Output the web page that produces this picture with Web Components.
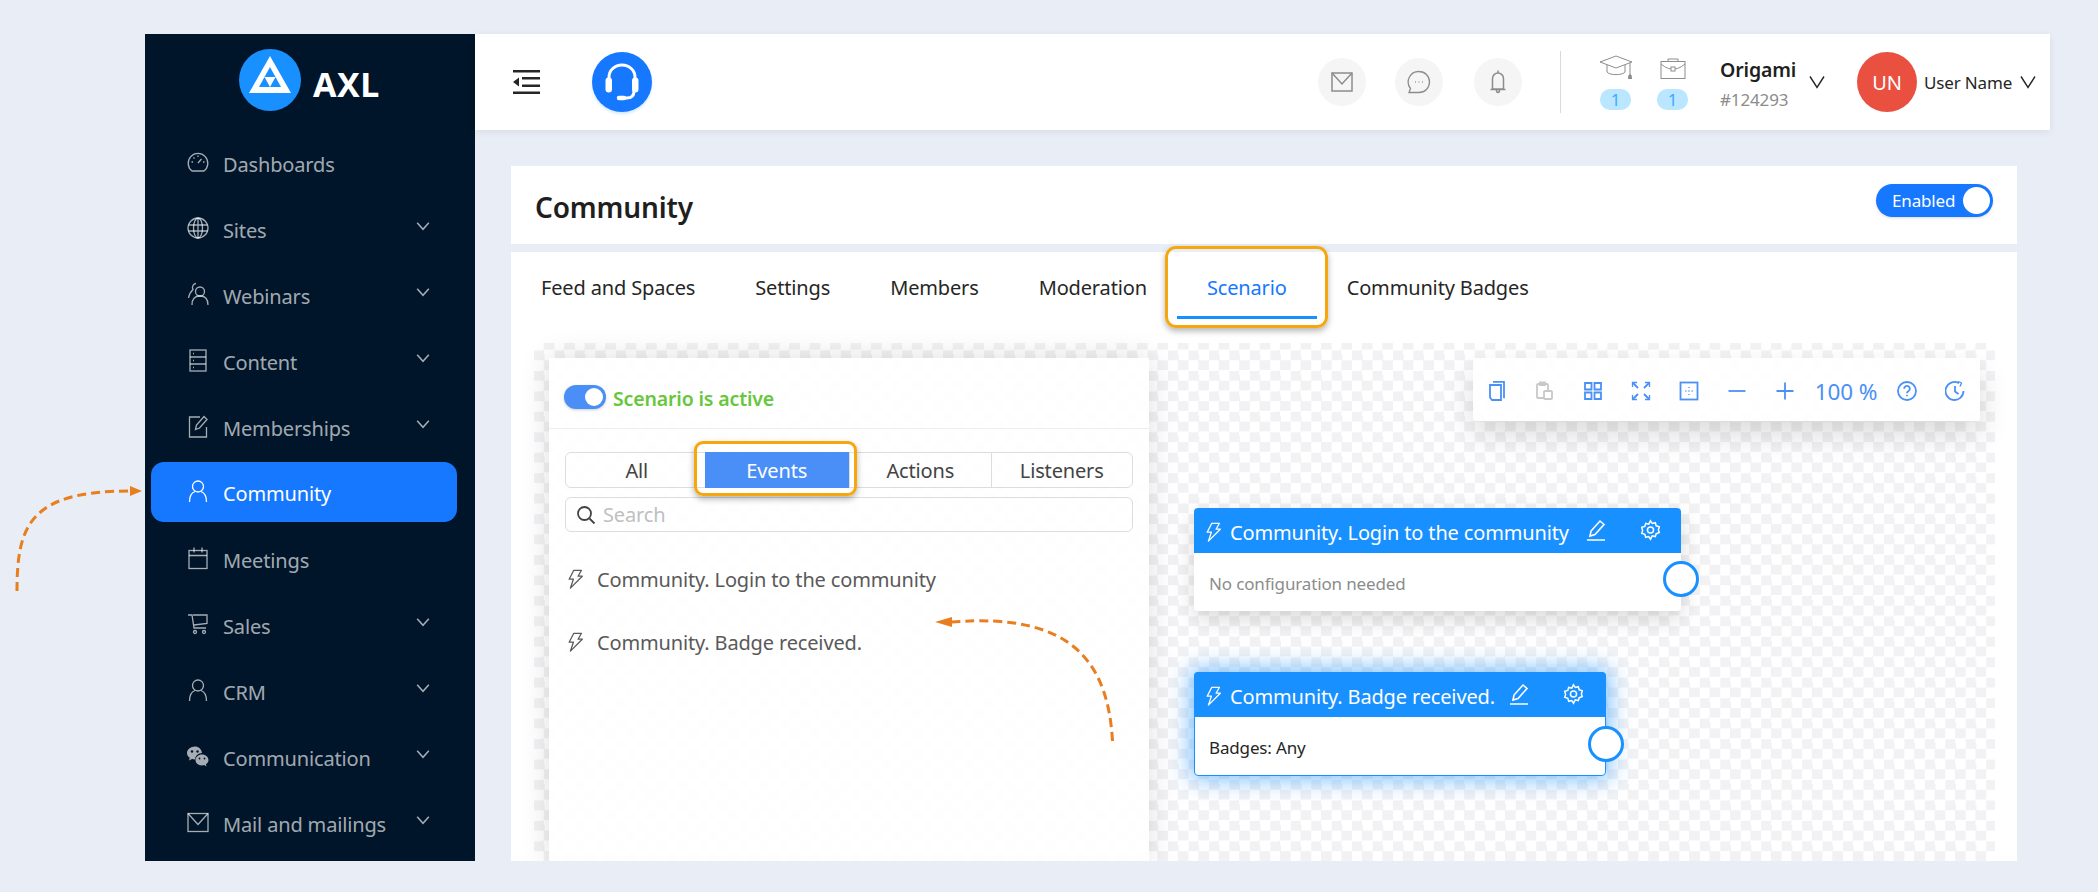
<!DOCTYPE html>
<html lang="en">
<head>
<meta charset="utf-8">
<title>AXL Community</title>
<style>
  html, body { margin: 0; height: 100%; }
  body {
    background: #e9eef6;
    font-family: "Noto Sans", "Open Sans", sans-serif;
    letter-spacing: -.15px;
    overflow: hidden;
  }
</style>
</head>
<body>

<axl-app>
  <axl-sidebar slot="side">
    <nav-item icon="dash" label="Dashboards"></nav-item>
    <nav-item icon="globe" label="Sites" more></nav-item>
    <nav-item icon="people" label="Webinars" more></nav-item>
    <nav-item icon="content" label="Content" more></nav-item>
    <nav-item icon="member" label="Memberships" more></nav-item>
    <nav-item icon="user" label="Community" active></nav-item>
    <nav-item icon="calendar" label="Meetings"></nav-item>
    <nav-item icon="cart" label="Sales" more></nav-item>
    <nav-item icon="user" label="CRM" more></nav-item>
    <nav-item icon="wechat" label="Communication" more></nav-item>
    <nav-item icon="mail" label="Mail and mailings" more></nav-item>
  </axl-sidebar>
  <axl-header slot="head"></axl-header>
  <title-card slot="main">Community</title-card>
  <tab-card slot="main">
    <scenario-canvas>
      <scenario-panel></scenario-panel>
      <canvas-toolbar></canvas-toolbar>
      <flow-node title="Community. Login to the community" style="left:660px;top:165px;width:487px;height:103px" edit-at="392" gear-at="446" port-y="71">No configuration needed</flow-node>
      <flow-node title="Community. Badge received." selected style="left:660px;top:329px;width:412px;height:104px" edit-at="315" gear-at="369" port-y="72">Badges: Any</flow-node>
    </scenario-canvas>
  </tab-card>
</axl-app>

<curved-arrow style="left:10px;top:484px" w="140" h="114" d="M7 107 C7 41 20 7 120 7" head="120,7 132,7"></curved-arrow>
<curved-arrow style="left:928px;top:612px" w="190" h="136" d="M184.500 129 C180 53 147 0 24 10" head="24,10 7,10"></curved-arrow>

<script>
const ICONS = {
  dash: '<path d="M6 21h12a9.800 9.800 0 1 0-12 0z"/><path d="M12 13l3.500-4M12 5.500v1.500M5.500 12H7M18.500 12H17M7.500 7.500l1 1"/>',
  globe: '<circle cx="12" cy="12" r="10"/><ellipse cx="12" cy="12" rx="4.500" ry="10"/><path d="M12 2v20M2.500 9h19M2.500 15h19"/>',
  people: '<circle cx="14" cy="9.500" r="4.500"/><path d="M6 23c0-5 2-9 8-9s8 4 8 9"/><path d="M10 1.500a4 4 0 0 0-3 6c-2 2-4 5-4.500 8.500"/>',
  content: '<rect x="4" y="2" width="16" height="21"/><path d="M4 9h16M4 16h16M7 5.500h1M7 12.500h1M7 19.500h1"/>',
  member: '<path d="M14 3H3.500v20h17V13"/><path d="M9.500 15.500l1-4.500L18 2.500l3 3-7.500 8.500z"/>',
  user: '<circle cx="12" cy="7.500" r="5.500"/><path d="M3.500 23c0-6 2.500-9.500 5.500-10.500M20.500 23c0-6-2.500-9.500-5.500-10.500"/>',
  calendar: '<rect x="3" y="4.500" width="18" height="18"/><path d="M3 9.500h18M8 1.500v5M16 1.500v5"/>',
  cart: '<path d="M2 3h4l2 13h12M7 3h14v8.500L8 13"/><circle cx="9" cy="20" r="1.500"/><circle cx="18" cy="20" r="1.500"/>',
  mail: '<rect x="2" y="3.500" width="20" height="18"/><path d="M2 3.500l10 11 10-11"/>',
  chev: '<path d="M5 8l7 8 7-8"/>',
  vee: '<path d="M5 6.500l7 11 7-11"/>'
};
const svg = (name, size, sw) =>
  `<svg width="${size}" height="${size}" viewBox="0 0 24 24" fill="none" stroke="currentColor" stroke-width="${sw || 1.300}">${ICONS[name]}</svg>`;
const WECHAT = '<svg width="24" height="24" viewBox="0 0 24 24" fill="currentColor"><path d="M9 2.500c-4.500 0-8 3-8 6.500 0 2 1 3.500 2.700 4.800L3 16.500l3-1.500c1 .3 2 .5 3 .5a7 7 0 0 1 7-6.500C15.500 5 12.500 2.500 9 2.500z"/><path d="M16 10.500c-3.800 0-6.500 2.500-6.500 5.500s2.700 5.500 6.500 5.500c.8 0 1.500-.1 2.200-.4l2.300 1.400-.6-2.300c1.500-1 2.600-2.500 2.600-4.200 0-3-2.700-5.500-6.500-5.500z"/><g fill="#001529"><circle cx="6" cy="7.500" r="1.200"/><circle cx="11.500" cy="7.500" r="1.200"/><circle cx="13.500" cy="14.500" r=".9"/><circle cx="18.500" cy="14.500" r=".9"/></g></svg>';
const BOLT = s => `<svg width="${s}" height="${s * 1.2}" viewBox="0 0 20 24" fill="none" stroke="currentColor" stroke-width="1.500" stroke-linejoin="round"><path d="M8 1.500h9l-4 7h5L4 22.500l3.500-10.500H2.500z"/></svg>`;

class AxlApp extends HTMLElement {
  constructor() {
    super();
    this.attachShadow({ mode: "open" });
    this.shadowRoot.innerHTML = `
<style>
  :host { display: grid; grid-template-columns: 330px 1575px; grid-template-rows: 96px 731px;
          margin: 34px 0 0 145px; width: 1905px; height: 827px; }
  .side { grid-row: 1 / 3; min-height: 0; overflow: hidden; display: block; }
  .body { display: flex; flex-direction: column; gap: 8px; padding: 36px 33px 0 36px; min-height: 0; overflow: hidden; }
</style>
<slot name="side" class="side"></slot>
<slot name="head"></slot>
<div class="body"><slot name="main"></slot></div>`;
  }
}

class AxlSidebar extends HTMLElement {
  constructor() {
    super();
    this.attachShadow({ mode: "open" });
    this.shadowRoot.innerHTML = `
<style>
  :host { display: block; height: 100%; background: #001529; overflow: hidden; }
  .logo { display: flex; align-items: center; gap: 12px; height: 100px; padding: 0 0 0 94px; box-sizing: border-box; }
  .logo b { color: #fff; font: 700 34px "Noto Sans", sans-serif; letter-spacing: .5px; }
  .items { display: flex; flex-direction: column; gap: 6px; }
</style>
<div class="logo">
  <svg width="62" height="62" viewBox="0 0 62 62" style="margin-top:-8px">
    <circle cx="31" cy="31" r="31" fill="#1890ff"/>
    <path fill="#fff" d="M31 7L52 44H10z"/>
    <path fill="#1890ff" d="M31 18L42 38H20z"/>
    <path fill="#fff" d="M25.500 28h11L31 38z"/>
  </svg>
  <b>AXL</b>
</div>
<div class="items"><slot></slot></div>`;
  }
}

class NavItem extends HTMLElement {
  connectedCallback() {
    const icon = this.getAttribute("icon");
    this.attachShadow({ mode: "open" });
    this.shadowRoot.innerHTML = `
<style>
  :host { display: flex; align-items: center; height: 60px; margin: 0 18px 0 6px; padding: 0 0 0 35px;
          border-radius: 13px; color: rgba(255,255,255,.65); font-size: 20px; }
  :host([active]) { background: #1677ff; color: #fff; margin-top: -2px; margin-bottom: 2px; padding-top: 2px; height: 58px; }
  .ic { width: 24px; height: 24px; margin: -4px 13px 0 0; }
  .ic svg { display: block; }
  .lb { flex: 1; white-space: nowrap; }
  .ch { margin-right: 24px; margin-top: -8px; display: flex; }
</style>
<span class="ic">${icon === "wechat" ? WECHAT : svg(icon, 24)}</span>
<span class="lb">${this.getAttribute("label")}</span>
${this.hasAttribute("more") ? `<span class="ch">${svg("chev", 20, 1.800)}</span>` : ""}`;
  }
}

class AxlHeader extends HTMLElement {
  constructor() {
    super();
    this.attachShadow({ mode: "open" });
    this.shadowRoot.innerHTML = `
<style>
  :host { display: flex; align-items: center; height: 96px; padding: 0 10px 0 38px; background: #fff;
          box-shadow: 0 2px 8px rgba(0,0,0,.07); color: #262626; position: relative; }
  .burger { width: 27px; height: 24px; margin-right: 52px; }
  .help { width: 60px; height: 60px; border-radius: 50%; background: #1677ff; box-shadow: 0 2px 3px rgba(24,144,255,.2); }
  .right { margin-left: auto; display: flex; align-items: center; }
  .round { width: 48px; height: 48px; border-radius: 50%; background: #f5f5f5; color: #8c8c8c; margin-right: 29px;
           display: flex; align-items: center; justify-content: center; }
  .round.wide { margin-right: 31px; }
  .rule { width: 1px; height: 62px; background: #d9d9d9; margin: 0 39px 0 9px; }
  .stat { width: 31px; display: flex; flex-direction: column; align-items: center; margin-right: 26px; color: #8c8c8c; }
  .stat .pic { height: 24px; margin-bottom: 10px; display: flex; align-items: flex-end; }
  .stat i { width: 31px; height: 21px; border-radius: 10px; background: #bae7ff; color: #40a9ff;
            font: 400 17px/21px "Noto Sans", sans-serif; text-align: center; }
  .org { margin: 4px 0 0 6px; line-height: 1; width: 79px; }
  .org b { display: block; font-weight: 600; font-size: 19.500px; color: #1f1f1f; margin-bottom: 12px; }
  .org span { color: #8c8c8c; font-size: 17px; }
  .chev { display: flex; color: #262626; }
  .av { width: 60px; height: 60px; border-radius: 50%; background: #e95040; color: #fff; font-size: 20px;
        display: flex; align-items: center; justify-content: center; margin: 0 7px 0 28px; }
  .name { font-size: 17px; width: 92px; white-space: nowrap; }
</style>
<svg class="burger" viewBox="0 0 27 24" fill="#262626"><path d="M0 0h27v2.500H0zM9 7h18v2.500H9zM9 14.500h18V17H9zM0 21.500h27V24H0zM6 7.500v9L0 12z"/></svg>
<svg class="help" viewBox="0 0 60 60" fill="none" stroke="#fff" stroke-width="3" stroke-linecap="round">
  <path d="M17 28v-3a13 12 0 0 1 26 0v3"/>
  <rect x="15" y="27" width="3.500" height="12" rx="1.700" fill="#fff"/>
  <rect x="41.500" y="27" width="3.500" height="12" rx="1.700" fill="#fff"/>
  <path d="M42 39c0 5-3 7-7 7h-7" /><path d="M27 46h5" stroke-width="4.500"/>
</svg>
<div class="right">
  <span class="round"><svg width="24" height="24" viewBox="0 0 24 24" fill="none" stroke="currentColor" stroke-width="1.500"><rect x="2" y="3" width="20" height="18"/><path d="M2 3l10 11L22 3"/></svg></span>
  <span class="round wide"><svg width="24" height="24" viewBox="0 0 24 24" fill="none" stroke="currentColor" stroke-width="1.300"><path d="M12 1.500a10.500 10.500 0 0 1 0 21H2l1.500-4A10.500 10.500 0 0 1 12 1.500z"/><path d="M8 12h.8M11.600 12h.8M15.200 12h.8" stroke-width="1.600"/></svg></span>
  <span class="round"><svg width="24" height="24" viewBox="0 0 24 24" fill="none" stroke="currentColor" stroke-width="1.500"><path d="M6.500 19V8.500a5.500 5.500 0 0 1 11 0V19zM4.500 19.500h15M12 .5V3M10.500 20a1.500 2.500 0 0 0 3 0"/></svg></span>
  <span class="rule"></span>
  <div class="stat"><span class="pic"><svg width="34" height="24" viewBox="0 0 34 24" fill="none" stroke="currentColor" stroke-width="1"><path d="M17 1L33 7 17 13 1 7z"/><path d="M8 10v7c3 3.500 15 3.500 18 0v-7M31 8v13"/><path d="M30 20h2l.500 4h-3z" fill="currentColor"/></svg></span><i>1</i></div>
  <div class="stat"><span class="pic"><svg width="26" height="21" viewBox="0 0 26 21" fill="none" stroke="currentColor" stroke-width="1"><rect x="1" y="3.500" width="24" height="17"/><path d="M8 3.500V1h10v2.500M1 6c5 4 8 5 12 5s7-1 12-5"/><rect x="11" y="9" width="4" height="4" fill="#fff"/></svg></span><i>1</i></div>
  <div class="org"><b>Origami</b><span>#124293</span></div>
  <span class="chev" style="margin-left:6px">${svg("vee", 24, 1.400)}</span>
  <span class="av">UN</span>
  <span class="name">User Name</span>
  <span class="chev">${svg("vee", 24, 1.400)}</span>
</div>`;
  }
}

class TitleCard extends HTMLElement {
  constructor() {
    super();
    this.attachShadow({ mode: "open" });
    this.shadowRoot.innerHTML = `
<style>
  :host { display: flex; align-items: center; justify-content: space-between; height: 78px; flex: none;
          padding: 0 24px; background: #fff; }
  h1 { margin: 4px 0 0; font-size: 28px; font-weight: 600; color: #1f1f1f; }
  .sw { display: flex; align-items: center; justify-content: space-between; width: 117px; height: 33px; margin-top: -9px;
        box-sizing: border-box; padding: 0 3px 0 16px; border-radius: 17px; background: #1677ff; color: #fff;
        font-size: 17px; box-shadow: 0 1px 3px rgba(0,0,0,.15); }
  .sw i { width: 27px; height: 27px; border-radius: 50%; background: #fff; }
</style>
<h1><slot></slot></h1>
<span class="sw">Enabled<i></i></span>`;
  }
}

class TabCard extends HTMLElement {
  constructor() {
    super();
    this.attachShadow({ mode: "open" });
    this.shadowRoot.innerHTML = `
<style>
  :host { display: flex; flex-direction: column; flex: 1; min-height: 0; background: #fff; }
  .tabs { display: flex; height: 67px; flex: none; margin-bottom: 24px; font-size: 20px; color: #262626; position: relative; z-index: 2; }
  .tab { padding: 0 30px; line-height: 72px; position: relative; white-space: nowrap; }
  .tab.on { color: #1677ff; border-bottom: 3px solid #1890ff; height: 64px; }
  .tab.on::after { content: ""; position: absolute; inset: -6px -11px -12px -12px; border: 3px solid #f5a70d;
                   border-radius: 11px; box-shadow: 0 3px 6px rgba(0,0,0,.3); }
  .wrap { flex: 1; min-height: 0; padding: 0 22px 0 23px; display: flex; }
</style>
<div class="tabs">
  <span class="tab">Feed and Spaces</span><span class="tab">Settings</span><span class="tab">Members</span>
  <span class="tab">Moderation</span><span class="tab on">Scenario</span><span class="tab">Community Badges</span>
</div>
<div class="wrap"><slot></slot></div>`;
  }
}

class ScenarioCanvas extends HTMLElement {
  constructor() {
    super();
    this.attachShadow({ mode: "open" });
    this.shadowRoot.innerHTML = `
<style>
  :host { display: block; flex: 1; position: relative; padding: 15px 0 0 15px; box-sizing: border-box;
          background-color: #fff;
          background-image: conic-gradient(#f2f2f4 25%, transparent 0 50%, #f2f2f4 0 75%, transparent 0);
          background-size: 20.460px 20.460px; background-position: 0 -3.200px; }
</style>
<slot></slot>`;
  }
}

class ScenarioPanel extends HTMLElement {
  constructor() {
    super();
    this.attachShadow({ mode: "open" });
    this.shadowRoot.innerHTML = `
<style>
  :host { display: block; width: 600px; height: 100%; background: rgba(255,255,255,.88);
          box-shadow: 0 0 28px rgba(0,0,0,.13); }
  .top { display: flex; align-items: center; gap: 7px; height: 71px; box-sizing: border-box; padding: 8px 0 0 15px; border-bottom: 1px solid #eee; }
  .tg { width: 42px; height: 24px; border-radius: 12px; background: #4a8ff7; position: relative; box-shadow: 0 1px 3px rgba(0,0,0,.2); }
  .tg i { position: absolute; right: 3px; top: 3px; width: 18px; height: 18px; border-radius: 50%; background: #fff; }
  .st { color: #67c73c; font-size: 19.500px; font-weight: 600; padding-top: 3px; }
  .seg { display: grid; grid-template-columns: repeat(4, 1fr); margin: 23px 16px 0; height: 36px; border: 1px solid #ddd;
         border-radius: 6px; font-size: 20px; color: #434343; box-sizing: border-box; }
  .seg span { display: flex; align-items: center; justify-content: center; border-left: 1px solid #ddd; position: relative; }
  .seg span:first-child { border-left: 0; }
  .seg .on { background: #4a8ff7; color: #fff; margin: -1px 0 -1px -3px; border: 0; }
  .seg .on::after { content: ""; position: absolute; inset: -11px -8px -8px -11px; border: 3px solid #f5a70d;
                    border-radius: 9px; box-shadow: 0 3px 6px rgba(0,0,0,.3); }
  .search { display: flex; align-items: center; gap: 7px; margin: 9px 16px 0; height: 35px; box-sizing: border-box;
            padding-left: 10px; border: 1px solid #ddd; border-radius: 6px; color: #bfbfbf; font-size: 20px; }
  .search svg { color: #434343; }
  .row { display: flex; align-items: center; gap: 13px; padding-left: 18px; height: 63px; color: #595959; font-size: 20px; }
  .list { margin-top: 16px; }
</style>
<div class="top"><span class="tg"><i></i></span><span class="st">Scenario is active</span></div>
<div class="seg"><span>All</span><span class="on">Events</span><span>Actions</span><span>Listeners</span></div>
<div class="search"><svg width="20" height="20" viewBox="0 0 20 20" fill="none" stroke="currentColor" stroke-width="1.800"><circle cx="8.500" cy="8.500" r="6.500"/><path d="M13.500 13.500l5 5"/></svg>Search</div>
<div class="list">
  <div class="row">${BOLT(17)}<span>Community. Login to the community</span></div>
  <div class="row">${BOLT(17)}<span>Community. Badge received.</span></div>
</div>`;
  }
}

class CanvasToolbar extends HTMLElement {
  constructor() {
    super();
    this.attachShadow({ mode: "open" });
    const i = (body, extra) => `<span class="t ${extra || ""}"><svg width="20" height="20" viewBox="0 0 20 20" fill="none" stroke="currentColor" stroke-width="1.800">${body}</svg></span>`;
    this.shadowRoot.innerHTML = `
<style>
  :host { position: absolute; top: 15px; right: 15px; width: 507px; height: 63px; display: flex; align-items: center;
          box-sizing: border-box; padding-top: 3px;
          background: rgba(255,255,255,.88); border-radius: 4px; color: #4a90f7;
          box-shadow: 0 14px 30px rgba(0,0,0,.14); }
  .t { width: 48px; flex: none; display: flex; justify-content: center; }
  .off { color: #c8c8c8; }
  .pc { width: 74px; flex: none; font-size: 22.500px; text-align: center; white-space: nowrap; }
</style>
${i('<path d="M6 .8h11v16.500M3 4h11v15H5l-2-2.500z"/>')}
${i('<rect x="2" y="3" width="11" height="14" rx="1"/><rect x="9" y="10" width="8" height="8" rx="1" fill="#fff"/><path d="M5 1.500h5V4H5z" fill="currentColor"/>', "off")}
${i('<path d="M2 2h6.500v6.500H2zM11.500 2H18v6.500h-6.500zM2 11.500h6.500V18H2zM11.500 11.500H18V18h-6.500z"/>')}
${i('<path d="M2 2l5 5M18 2l-5 5M2 18l5-5M18 18l-5-5"/><path d="M1.500 6V1.500H6M14 1.500h4.500V6M1.500 14v4.500H6M14 18.500h4.500V14" stroke-width="1.300"/>')}
${i('<rect x="1.500" y="1.500" width="17" height="17"/><path d="M10 6v.8M10 9.600v.8M10 13.200v.8M6.500 10h.8M12.700 10h.8"/>')}
${i('<path d="M1.500 10h17"/>')}
${i('<path d="M1.500 10h17M10 1.500v17"/>')}
<span class="pc">100 %</span>
${i('<circle cx="10" cy="10" r="9"/><path d="M7.200 7.800a2.800 2.800 0 1 1 4.300 2.300c-1 .6-1.500 1-1.500 2.200M10 14v1.300"/>')}
${i('<path d="M18.500 10A9 9 0 1 1 14 2.200M10 5v5.500l3.500 2.500"/><path d="M13 .5l3.500 1.500L15 5.500" stroke-width="1.300"/>')}`;
  }
}

class FlowNode extends HTMLElement {
  connectedCallback() {
    this.attachShadow({ mode: "open" });
    const at = n => +this.getAttribute(n);
    this.shadowRoot.innerHTML = `
<style>
  :host { position: absolute; display: block; box-sizing: border-box; background: #fff; border-radius: 4px;
          box-shadow: 0 8px 22px rgba(0,0,0,.15); font-size: 20px; }
  :host([selected]) { outline: 1.500px solid #1890ff; outline-offset: -1.500px; box-shadow: 0 0 22px 4px rgba(24,144,255,.55); }
  .h { display: flex; align-items: center; height: 45px; box-sizing: border-box; padding: 3px 0 0 11px; background: #1890ff; color: #fff; border-radius: 4px 4px 0 0; position: relative; gap: 8px; white-space: nowrap; }
  .h svg.a { position: absolute; top: 11px; }
  .b { padding: 19px 15px 0; font-size: 17px; color: #8c8c8c; white-space: nowrap; }
  :host([selected]) .b { color: #262626; }
  .p { position: absolute; right: -18px; width: 30px; height: 30px; border: 3px solid #1890ff; border-radius: 50%; background: #fff; }
</style>
<div class="h">${BOLT(17)}<span>${this.getAttribute("title")}</span>
  <svg class="a" style="left:${at("edit-at")}px" width="20" height="22" viewBox="0 0 20 22" fill="none" stroke="currentColor" stroke-width="1.600"><path d="M1 21h18M4 17l1-5L14 2l4 3.500-9 10z"/></svg>
  <svg class="a" style="left:${at("gear-at")}px" width="21" height="22" viewBox="0 0 24 24" fill="none" stroke="currentColor" stroke-width="1.700"><circle cx="12" cy="12" r="3.500"/><path d="M12 1.500l2 3 3.500-.8 1 3.500 3.500 1-1 3.800 1 3-3.500 1.200-1 3.300-3.500-.8L12 22.500l-2-3-3.500.8-1-3.300L2 15.800l1-3-1-3.800 3.500-1 1-3.500 3.500.8z"/></svg>
</div>
<div class="b"><slot></slot></div>
<span class="p" style="top:${at("port-y") - 18}px"></span>`;
  }
}

class CurvedArrow extends HTMLElement {
  connectedCallback() {
    this.attachShadow({ mode: "open" });
    const w = this.getAttribute("w"), h = this.getAttribute("h");
    const [a, b] = this.getAttribute("head").split(" ").map(p => p.split(",").map(Number));
    const dx = b[0] - a[0], dy = b[1] - a[1], l = Math.hypot(dx, dy), nx = -dy / l * 5, ny = dx / l * 5;
    this.shadowRoot.innerHTML = `
<style>:host { position: absolute; display: block; } svg { display: block; }</style>
<svg width="${w}" height="${h}" fill="none">
  <path d="${this.getAttribute("d")}" stroke="#e87e1e" stroke-width="3" stroke-dasharray="9 5"/>
  <polygon fill="#e87e1e" points="${a[0] + nx},${a[1] + ny} ${b[0]},${b[1]} ${a[0] - nx},${a[1] - ny}"/>
</svg>`;
  }
}

customElements.define("axl-app", AxlApp);
customElements.define("axl-sidebar", AxlSidebar);
customElements.define("nav-item", NavItem);
customElements.define("axl-header", AxlHeader);
customElements.define("title-card", TitleCard);
customElements.define("tab-card", TabCard);
customElements.define("scenario-canvas", ScenarioCanvas);
customElements.define("scenario-panel", ScenarioPanel);
customElements.define("canvas-toolbar", CanvasToolbar);
customElements.define("flow-node", FlowNode);
customElements.define("curved-arrow", CurvedArrow);
</script>
</body>
</html>
